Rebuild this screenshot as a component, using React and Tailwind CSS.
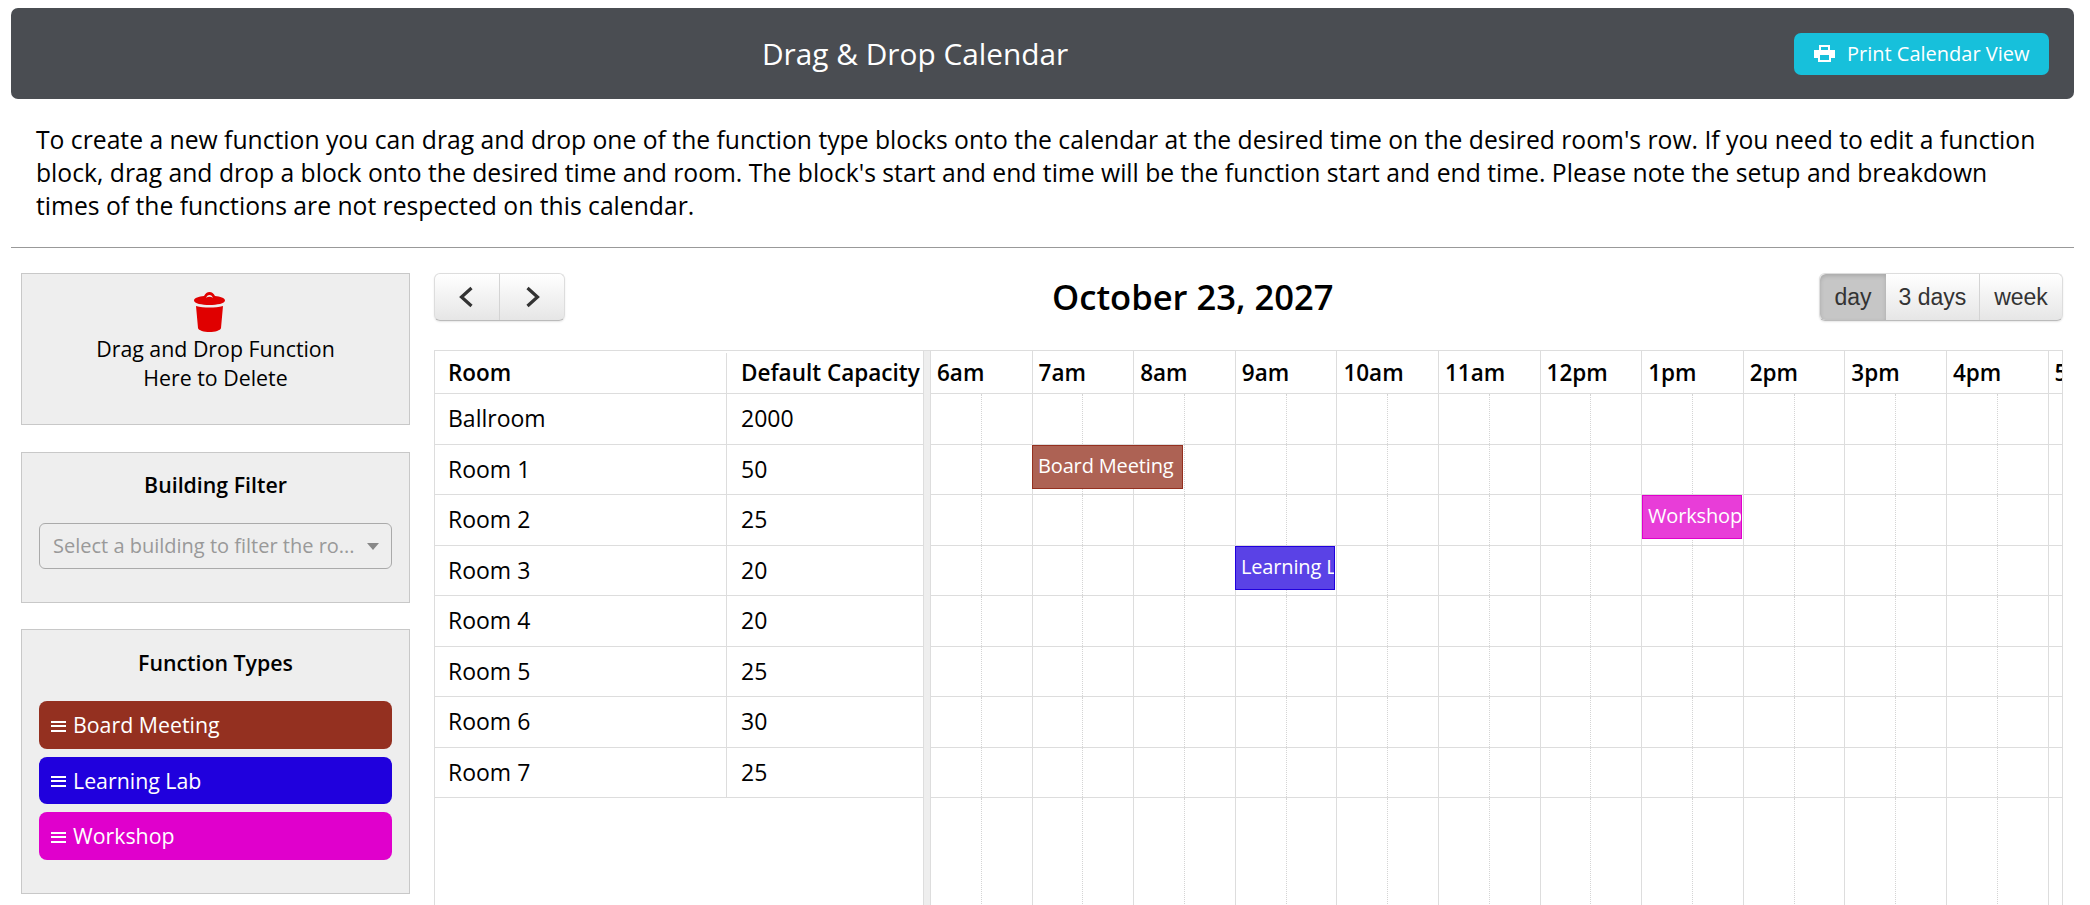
const hours = ["6am","7am","8am","9am","10am","11am","12pm","1pm","2pm","3pm","4pm","5pm"];
const rooms = [["Ballroom","2000"],["Room 1","50"],["Room 2","25"],["Room 3","20"],["Room 4","20"],["Room 5","25"],["Room 6","30"],["Room 7","25"]];
const types = [["Board Meeting","bg-[#943020]"],["Learning Lab","bg-[#2000dd]"],["Workshop","bg-[#e000cc]"]];

function Cells() {
  return (
    <div className="flex h-full w-[1220px] shrink-0">
      {hours.map((h) => (
        <div key={h} className="flex h-full w-[101.6px] shrink-0">
          <div className="h-full w-[50.8px] border-r border-dotted border-[#d4d4d4]" />
          <div className="h-full w-[50.8px] border-r border-[#dddddd]" />
        </div>
      ))}
    </div>
  );
}

function Event({ label, cls }) {
  return (
    <div className={`absolute top-0 h-[44px] overflow-hidden whitespace-nowrap border pl-[5px] text-[20px] leading-[40px] tracking-[-0.15px] text-white ${cls}`}>
      {label}
    </div>
  );
}

function Panel({ className, children }) {
  return <div className={`w-[389px] border border-[#c8c8c8] bg-[#eeeeee] ${className}`}>{children}</div>;
}

function Chevron({ left }) {
  return (
    <svg className={left ? "mr-[2px]" : "ml-[2px]"} width="16" height="22" viewBox="0 0 16 22" fill="none" stroke="#333333" strokeWidth="3.2">
      <path d={left ? "M13.500 2 L3.500 11 L13.500 20" : "M2.500 2 L12.500 11 L2.500 20"} />
    </svg>
  );
}

export default function App() {
  return (
    <div className="h-[905px] w-[2090px] overflow-hidden bg-white font-['Open_Sans',sans-serif] text-black">
      <div className="pl-[11px] pr-[16px] pt-[8px]">
        <header className="relative flex h-[91px] items-center justify-end rounded-[7px] bg-[#4a4d52] pr-[25px]">
          <h1 className="absolute left-[751px] text-[29.8px] leading-[40px] text-white">Drag &amp; Drop Calendar</h1>
          <button className="flex h-[42px] w-[255px] items-center gap-[12px] rounded-[7px] bg-[#17c0db] pl-[20px] text-[20px] text-white">
            <svg width="21" height="17" viewBox="0 0 21 17" fill="#ffffff" fillRule="evenodd">
              <path d="M5 0H16V5H21V13H17V17H4V13H0V5H5ZM7 2V5H14V2ZM6 10V15H15V10Z" />
            </svg>
            <span>Print Calendar View</span>
          </button>
        </header>
        <p className="pl-[25px] pr-[20px] pt-[24px] text-[24.7px] leading-[33px]">
          To create a new function you can drag and drop one of the function type blocks onto the calendar at the desired time on the desired room's row. If you need to edit a function block, drag and drop a block onto the desired time and room. The block's start and end time will be the function start and end time. Please note the setup and breakdown times of the functions are not respected on this calendar.
        </p>
        <div className="mt-[25px] h-px bg-[#999999]" />
      </div>

      <div className="mt-[25px] flex pl-[21px]">
        <aside className="flex w-[413px] shrink-0 flex-col">
          <Panel className="flex h-[152px] flex-col items-center pt-[18px]">
            <svg className="ml-[-12px]" width="33" height="40" viewBox="0 0 33 40" fill="#e00000">
              <path d="M16.500 0C19 0 20.500 1.500 22 4C27 4.500 32 6 32 8.500C32 11.500 24 13 16.500 13C9 13 1 11.500 1 8.500C1 6 6 4.500 11 4C12.500 1.500 14 0 16.500 0ZM16.500 3C14.800 3 13.800 4.200 13 5.800C15.500 4.300 17.500 4.300 20 5.800C19.200 4.200 18.200 3 16.500 3Z" fillRule="evenodd" />
              <path d="M3 14C11 16 22 16 30 14L28 36C27.500 38.500 22 40 16.500 40C11 40 5.500 38.500 5 36Z" />
            </svg>
            <div className="mt-[2px] text-center text-[21.33px] leading-[29px]">Drag and Drop Function<br />Here to Delete</div>
          </Panel>
          <Panel className="mt-[27px] flex h-[151px] flex-col items-center">
            <div className="mt-[17px] text-[21.33px] font-semibold leading-[30px]">Building Filter</div>
            <div className="mt-[23px] flex h-[46px] w-[353px] items-center justify-between rounded-[6px] border border-[#aaaaaa] pl-[13px] pr-[12px] text-[20px] text-[#999999]">
              <span>Select a building to filter the ro...</span>
              <svg width="12" height="7" viewBox="0 0 12 7" fill="#888888"><path d="M0 0H12L6 7Z" /></svg>
            </div>
          </Panel>
          <Panel className="mt-[26px] flex h-[265px] flex-col items-center">
            <div className="mt-[18px] text-[21.33px] font-semibold leading-[30px]">Function Types</div>
            <div className="mt-[23px] flex w-[353px] flex-col gap-[8px]">
              {types.map(([t, c]) => (
                <div key={t} className={`flex h-[47.500px] items-center gap-[7px] rounded-[8px] pl-[12px] pt-[1px] text-[21.33px] text-white ${c}`}>
                  <svg className="mt-[2px]" width="15" height="11" viewBox="0 0 15 11" fill="#ffffff">
                    <rect width="15" height="2" /><rect y="4" width="15" height="2" /><rect y="9" width="15" height="2" />
                  </svg>
                  <span>{t}</span>
                </div>
              ))}
            </div>
          </Panel>
        </aside>

        <main className="flex w-[1629px] shrink-0 flex-col">
          <div className="relative flex h-[48px] items-start justify-between">
            <div className="flex h-[48px] w-[131px] rounded-[6px] border border-[#dddddd] border-b-[#bbbbbb] bg-gradient-to-b from-white to-[#e6e6e6] shadow-[0_1px_2px_rgba(0,0,0,0.1)]">
              <div className="flex w-[65px] items-center justify-center border-r border-[#d4d4d4]"><Chevron left /></div>
              <div className="flex flex-1 items-center justify-center"><Chevron /></div>
            </div>
            <h2 className="absolute left-[618px] top-[2px] text-[34.600px] font-semibold leading-[44px]">October 23, 2027</h2>
            <div className="flex h-[48px] w-[244px] rounded-[6px] border border-[#dddddd] border-b-[#bbbbbb] bg-gradient-to-b from-white to-[#e6e6e6] font-['Liberation_Sans',sans-serif] text-[23px] text-[#333333] shadow-[0_1px_2px_rgba(0,0,0,0.1)]">
              <div className="flex w-[66px] items-center justify-center rounded-l-[6px] bg-[#c6c6c6] shadow-[inset_0_2px_4px_rgba(0,0,0,0.15)]">day</div>
              <div className="flex w-[94px] items-center justify-center border-r border-[#d4d4d4]">3 days</div>
              <div className="flex flex-1 items-center justify-center">week</div>
            </div>
          </div>

          <div className="mt-[29px] flex h-[555px] w-[1629px] border-l border-r border-t border-[#dddddd]">
            <div className="w-[488px] shrink-0">
              <div className="flex h-[43px] items-center border-b border-[#dddddd] pt-[2px] text-[22.500px] font-semibold">
                <div className="flex h-full w-[292px] items-center border-r border-[#dddddd] pl-[13px]">Room</div>
                <div className="pl-[14px] whitespace-nowrap">Default Capacity</div>
              </div>
              {rooms.map(([r, c]) => (
                <div key={r} className="flex h-[50.500px] items-center border-b border-[#dddddd] text-[23px]">
                  <div className="flex h-full w-[292px] items-center border-r border-[#dddddd] pb-[1px] pl-[13px]">{r}</div>
                  <div className="pb-[1px] pl-[14px]">{c}</div>
                </div>
              ))}
            </div>
            <div className="w-[8px] shrink-0 border-x border-[#dddddd] bg-[#eeeeee]" />
            <div className="min-w-0 flex-1 overflow-hidden">
              <div className="flex h-[43px] border-b border-[#dddddd]">
                {hours.map((h) => (
                  <div key={h} className="flex h-full w-[101.6px] shrink-0 items-center border-r border-[#dddddd] pl-[6px] pt-[2px] text-[22.500px] font-semibold">{h}</div>
                ))}
              </div>
              {rooms.map(([r], i) => (
                <div key={r} className="relative h-[50.500px] border-b border-[#dddddd]">
                  <Cells />
                  {i === 1 && <Event label="Board Meeting" cls="left-[101px] w-[151px] border-[#943020] bg-[#ad6254]" />}
                  {i === 2 && <Event label="Workshop" cls="left-[711px] w-[100px] border-[#e000cc] bg-[#e83dd8]" />}
                  {i === 3 && <Event label="Learning Lab" cls="left-[304px] w-[100px] border-[#2000dd] bg-[#5a42e6]" />}
                </div>
              ))}
              <div className="h-[120px]"><Cells /></div>
            </div>
          </div>
        </main>
      </div>
    </div>
  );
}
